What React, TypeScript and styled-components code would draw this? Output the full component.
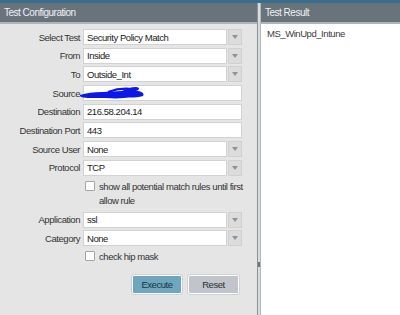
import styled, { createGlobalStyle } from 'styled-components';

const GlobalStyle = createGlobalStyle`
  html, body {
    margin: 0;
    padding: 0;
    background: #ffffff;
  }
  body {
    font-family: 'Liberation Sans', Arial, sans-serif;
    font-size: 9.5px;
    letter-spacing: -0.45px;
    color: #2b2b2b;
  }
`;

const Page = styled.div`
  width: 400px;
  height: 315px;
  display: flex;
  flex-direction: column;
  overflow: hidden;
`;

const TopStrip = styled.div`
  height: 3px;
  background: #3b6d8e;
`;

const Main = styled.div`
  flex: 1;
  display: flex;
`;

const LeftPanel = styled.div`
  width: 257px;
  background: #e5e5e5;
  display: flex;
  flex-direction: column;
`;

const Splitter = styled.div`
  width: 2px;
  background: #dadde0;
  border-left: 1px solid #8b939a;
  border-right: 1px solid #b3b8bd;
  position: relative;
`;

const Handle = styled.div`
  position: absolute;
  left: 0;
  top: 259px;
  width: 2px;
  height: 5px;
  background: #6d757c;
`;

const RightPanel = styled.div`
  flex: 1;
  background: #ffffff;
  display: flex;
  flex-direction: column;
`;

const Header = styled.div`
  height: 19px;
  background: #69737c;
  border-bottom: 2px solid #aeb5bb;
  color: #eef2f5;
  font-size: 10px;
  letter-spacing: -0.5px;
  display: flex;
  align-items: center;
  padding-left: 4px;
`;

const Form = styled.div`
  display: flex;
  flex-direction: column;
  padding-top: 5px;
`;

const Row = styled.div`
  display: flex;
  align-items: center;
  height: 16px;
  margin-bottom: 2.7px;
  position: relative;
`;

const Label = styled.div`
  width: 80px;
  text-align: right;
  margin-right: 3px;
  color: #333333;
  white-space: nowrap;
`;

const TextBox = styled.div<{ $width: number }>`
  width: ${(p) => p.$width}px;
  height: 16px;
  box-sizing: border-box;
  background: #ffffff;
  border: 1px solid #d2d2d2;
  padding-left: 3px;
  display: flex;
  align-items: center;
  color: #222222;
  white-space: nowrap;
`;

const ArrowButton = styled.div`
  width: 14px;
  height: 16px;
  margin-left: 1px;
  box-sizing: border-box;
  background: #dcdcdc;
  border: 1px solid #d0d0d0;
  display: flex;
  align-items: center;
  justify-content: center;
  &::after {
    content: '';
    border-left: 3.5px solid transparent;
    border-right: 3.5px solid transparent;
    border-top: 4px solid #8795a1;
  }
`;

const CheckRow = styled.div<{ $top: number; $bottom: number }>`
  display: flex;
  align-items: flex-start;
  padding-left: 85px;
  margin-top: ${(p) => p.$top}px;
  margin-bottom: ${(p) => p.$bottom}px;
`;

const CheckBox = styled.div`
  width: 10px;
  height: 10px;
  box-sizing: border-box;
  background: #ffffff;
  border: 1px solid #a6a6a6;
  border-radius: 1px;
  margin-right: 4px;
  flex: none;
`;

const CheckText = styled.div`
  line-height: 14px;
  margin-top: -1px;
  color: #333333;
  white-space: nowrap;
`;

const ButtonBar = styled.div`
  display: flex;
  gap: 6px;
  padding-left: 132px;
  margin-top: 11px;
`;

const Button = styled.div<{ $primary?: boolean }>`
  width: ${(p) => (p.$primary ? 50 : 51)}px;
  height: 19px;
  box-sizing: border-box;
  border: 1px solid #ffffff;
  outline: 1px solid #d0d3d6;
  border-radius: 2px;
  background: ${(p) => (p.$primary ? '#6fa6bd' : '#c1c4cb')};
  color: ${(p) => (p.$primary ? '#15374a' : '#2a2f36')};
  display: flex;
  align-items: center;
  justify-content: center;
`;

const ResultText = styled.div`
  padding: 4px 0 0 6px;
  color: #3c3c3c;
`;

const Scribble = styled.svg`
  position: absolute;
  left: 78px;
  top: 0px;
  width: 68px;
  height: 16px;
  pointer-events: none;
`;

const SelectField = ({ label, value }: { label: string; value: string }) => (
  <Row>
    <Label>{label}</Label>
    <TextBox $width={144}>{value}</TextBox>
    <ArrowButton />
  </Row>
);

const InputField = ({
  label,
  value,
  children,
}: {
  label: string;
  value: string;
  children?: React.ReactNode;
}) => (
  <Row>
    <Label>{label}</Label>
    <TextBox $width={159}>{value}</TextBox>
    {children}
  </Row>
);

const App = () => {
  return (
    <Page>
      <GlobalStyle />
      <TopStrip />
      <Main>
        <LeftPanel>
          <Header>Test Configuration</Header>
          <Form>
            <SelectField label='Select Test' value='Security Policy Match' />
            <SelectField label='From' value='Inside' />
            <SelectField label='To' value='Outside_Int' />
            <InputField label='Source' value=''>
              <Scribble viewBox='0 0 68 16'>
                <path
                  d='M2 10 C8 8 16 7 24 7 C32 7 38 6 44 6 C48 4 53 2 58 2 C62 2 62 5 58 6 C63 6 67 8 65 11 C60 13 52 12 46 13 C38 14 28 13 18 13 C10 13 4 13 2 11 Z'
                  fill='#0c18e8'
                />
                <path
                  d='M30 7 C38 4 46 3 54 4'
                  stroke='#0c18e8'
                  strokeWidth='2'
                  fill='none'
                />
              </Scribble>
            </InputField>
            <InputField label='Destination' value='216.58.204.14' />
            <InputField label='Destination Port' value='443' />
            <SelectField label='Source User' value='None' />
            <SelectField label='Protocol' value='TCP' />
            <CheckRow $top={2.3} $bottom={4}>
              <CheckBox />
              <CheckText>
                show all potential match rules until first
                <br />
                allow rule
              </CheckText>
            </CheckRow>
            <SelectField label='Application' value='ssl' />
            <SelectField label='Category' value='None' />
            <CheckRow $top={1.5} $bottom={0}>
              <CheckBox />
              <CheckText>check hip mask</CheckText>
            </CheckRow>
            <ButtonBar>
              <Button $primary>Execute</Button>
              <Button>Reset</Button>
            </ButtonBar>
          </Form>
        </LeftPanel>
        <Splitter>
          <Handle />
        </Splitter>
        <RightPanel>
          <Header>Test Result</Header>
          <ResultText>MS_WinUpd_Intune</ResultText>
        </RightPanel>
      </Main>
    </Page>
  );
};

export default App;
